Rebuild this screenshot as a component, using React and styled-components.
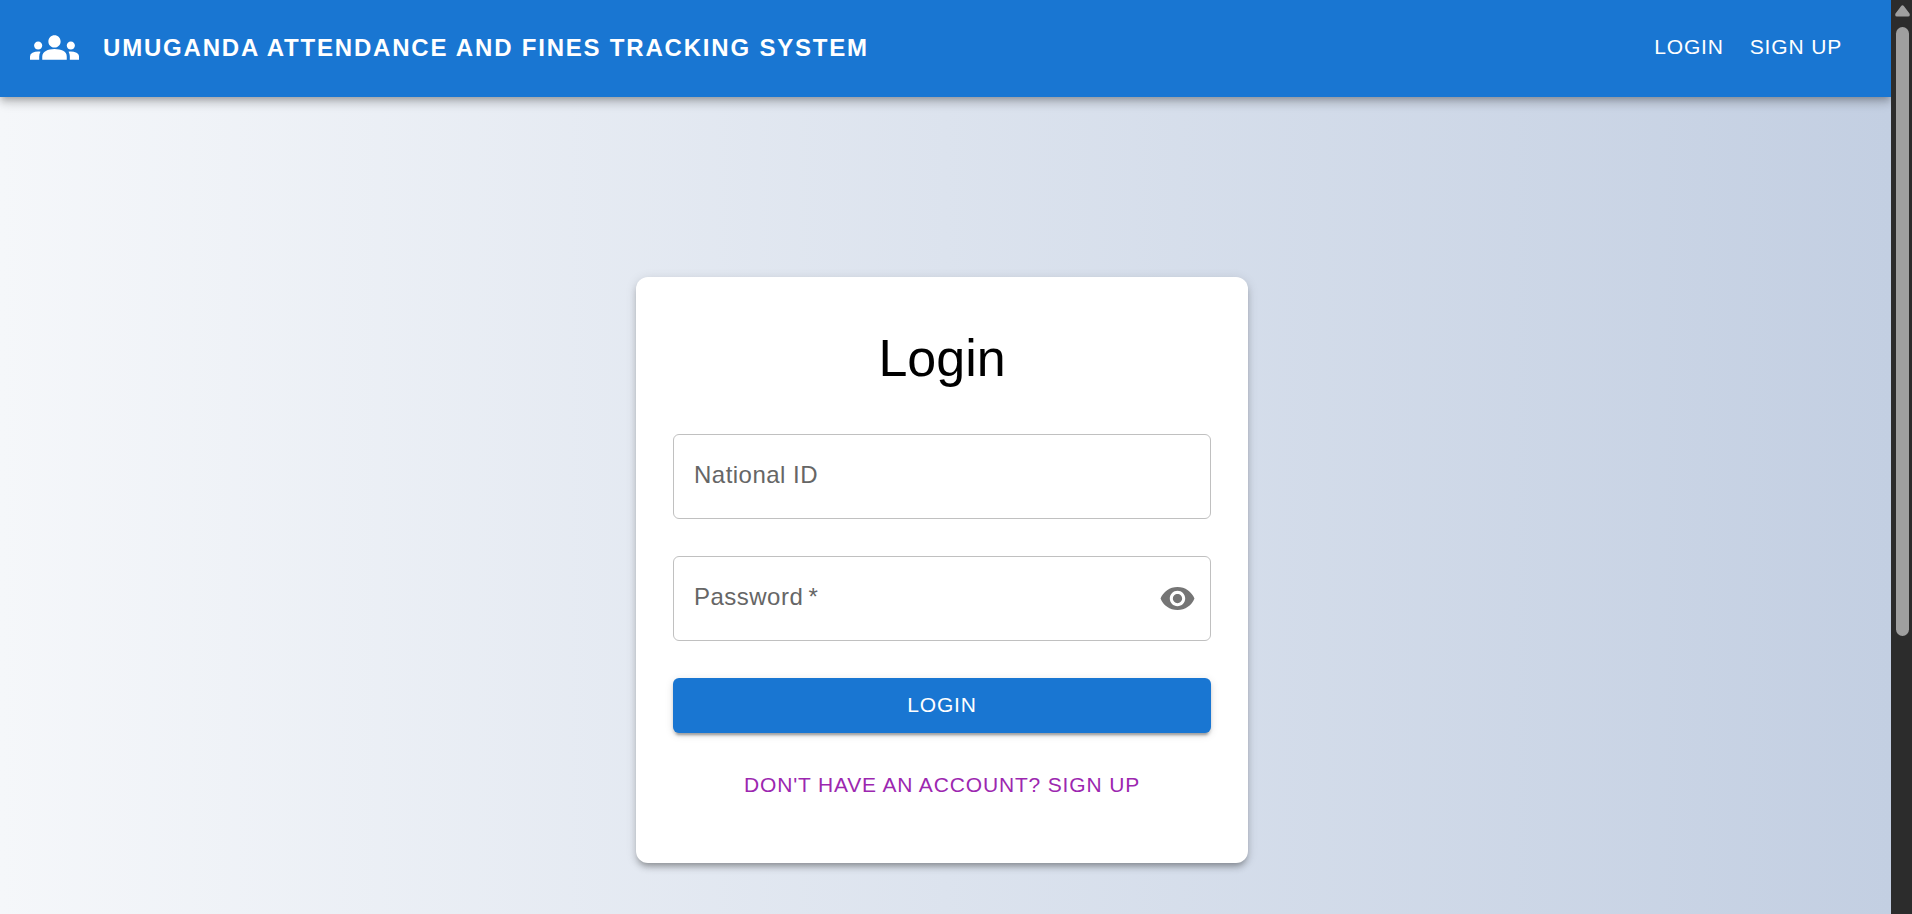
import React, { useState } from "react";
import styled, { createGlobalStyle } from "styled-components";
import { MdGroups, MdVisibility, MdVisibilityOff } from "react-icons/md";

const GlobalStyle = createGlobalStyle`
  * {
    box-sizing: border-box;
  }

  body {
    margin: 0;
    font-family: "Liberation Sans", Arial, sans-serif;
  }
`;

const Window = styled.div`
  display: flex;
  height: 100vh;
  overflow: hidden;
`;

const Page = styled.div`
  flex: 1;
  min-width: 0;
  display: flex;
  flex-direction: column;
  overflow: hidden;
  background: linear-gradient(to right, #f5f7fa, #c3cfe2);
`;

const AppBar = styled.header`
  display: flex;
  align-items: center;
  flex-shrink: 0;
  min-height: 97px;
  padding: 0 36px 2px 30px;
  color: #fff;
  background-color: #1976d2;
  box-shadow:
    0 3px 6px -2px rgba(0, 0, 0, 0.2),
    0 6px 8px 0 rgba(0, 0, 0, 0.14),
    0 2px 15px 0 rgba(0, 0, 0, 0.12);
`;

const Brand = styled.div`
  flex: 1;
  display: flex;
  align-items: center;
  gap: 24px;
`;

const BrandName = styled.h1`
  margin: 0;
  font-size: 24px;
  font-weight: 700;
  line-height: 38px;
  letter-spacing: 0.075em;
  text-transform: uppercase;
`;

const Nav = styled.nav`
  display: flex;
`;

const NavLink = styled.a`
  padding: 8px 13px 10px;
  color: inherit;
  font-size: 21px;
  line-height: 37px;
  letter-spacing: 0.04em;
  text-decoration: none;
  text-transform: uppercase;
`;

const Main = styled.main`
  display: flex;
  justify-content: center;
  padding: 180px 7px 0 0;
`;

const Card = styled.form`
  display: flex;
  flex-direction: column;
  width: 612px;
  padding: 49px 37px 50px;
  border-radius: 12px;
  background-color: #fff;
  box-shadow:
    0 5px 5px -3px rgba(0, 0, 0, 0.2),
    0 5px 6px 0 rgba(0, 0, 0, 0.14),
    0 2px 12px 0 rgba(0, 0, 0, 0.12);
`;

const Title = styled.h2`
  margin: 0 0 44px;
  font-size: 52px;
  font-weight: 400;
  line-height: 64px;
  text-align: center;
`;

const Field = styled.div`
  position: relative;
  display: flex;
  align-items: center;
  height: 85px;
  margin-bottom: 37px;
  padding-right: 14px;
  border: 1px solid #c0c0c0;
  border-radius: 6px;

  &:focus-within {
    border-color: #1976d2;
  }
`;

/* Sits over the empty input, moves onto the border once it is used */
const Label = styled.label`
  position: absolute;
  top: 22px;
  left: 20px;
  color: #666;
  font-size: 24px;
  line-height: 36px;
  letter-spacing: 0.02em;
  pointer-events: none;
`;

const Input = styled.input`
  flex: 1;
  min-width: 0;
  height: 100%;
  padding: 0 20px;
  border: 0;
  outline: 0;
  background: transparent;
  font: inherit;
  font-size: 24px;

  &:focus + ${Label}, &:not(:placeholder-shown) + ${Label} {
    top: -18px;
    padding: 0 6px;
    background-color: #fff;
    font-size: 18px;
  }
`;

const IconButton = styled.button`
  display: flex;
  padding: 0;
  border: 0;
  background: none;
  color: #757575;
  cursor: pointer;
`;

const Button = styled.button`
  height: 55px;
  padding: 0 12px 2px;
  border: 0;
  border-radius: 6px;
  font-family: inherit;
  font-size: 21px;
  letter-spacing: 0.04em;
  text-transform: uppercase;
  cursor: pointer;
`;

const SubmitButton = styled(Button)`
  margin-bottom: 25px;
  color: #fff;
  background-color: #1976d2;
  box-shadow:
    0 5px 2px -3px rgba(0, 0, 0, 0.2),
    0 3px 3px 0 rgba(0, 0, 0, 0.14),
    0 2px 8px 0 rgba(0, 0, 0, 0.12);
`;

const TextButton = styled(Button)`
  color: #9c27b0;
  background: none;
`;

const ScrollBar = styled.div`
  display: flex;
  flex-direction: column;
  align-items: center;
  width: 21px;
  padding: 5px 0 0 2px;
  background-color: #2c2c2c;
`;

const ScrollArrow = styled.svg`
  flex-shrink: 0;
  width: 15px;
  height: 12px;
  margin-bottom: 10px;
  fill: #9f9f9f;
`;

const ScrollThumb = styled.div`
  width: 13px;
  height: 67%;
  border-radius: 7px;
  background-color: #9f9f9f;
`;

const App = () => {
  const [showPassword, setShowPassword] = useState(false);

  return (
    <Window>
      <GlobalStyle />
      <Page>
        <AppBar>
          <Brand>
            <MdGroups size={49} />
            <BrandName>Umuganda Attendance and Fines Tracking System</BrandName>
          </Brand>
          <Nav>
            <NavLink href="#login">Login</NavLink>
            <NavLink href="#signup">Sign Up</NavLink>
          </Nav>
        </AppBar>
        <Main>
          <Card onSubmit={(e) => e.preventDefault()}>
            <Title>Login</Title>
            <Field>
              <Input id="national-id" type="text" placeholder=" " />
              <Label htmlFor="national-id">National ID</Label>
            </Field>
            <Field>
              <Input
                id="password"
                type={showPassword ? "text" : "password"}
                placeholder=" "
                required
              />
              <Label htmlFor="password">Password{"\u2009"}*</Label>
              <IconButton
                type="button"
                aria-label="toggle password visibility"
                onClick={() => setShowPassword(!showPassword)}
              >
                {showPassword ? (
                  <MdVisibilityOff size={37} />
                ) : (
                  <MdVisibility size={37} />
                )}
              </IconButton>
            </Field>
            <SubmitButton type="submit">Login</SubmitButton>
            <TextButton type="button">Don't have an account? Sign Up</TextButton>
          </Card>
        </Main>
      </Page>
      <ScrollBar aria-hidden="true">
        <ScrollArrow viewBox="0 0 15 12">
          <path d="M6 1.2Q7.5 -.8 9 1.2L14.5 8.5Q15.5 11.5 13 11.5H2Q-.5 11.5 .5 8.5Z" />
        </ScrollArrow>
        <ScrollThumb />
      </ScrollBar>
    </Window>
  );
};

export default App;
